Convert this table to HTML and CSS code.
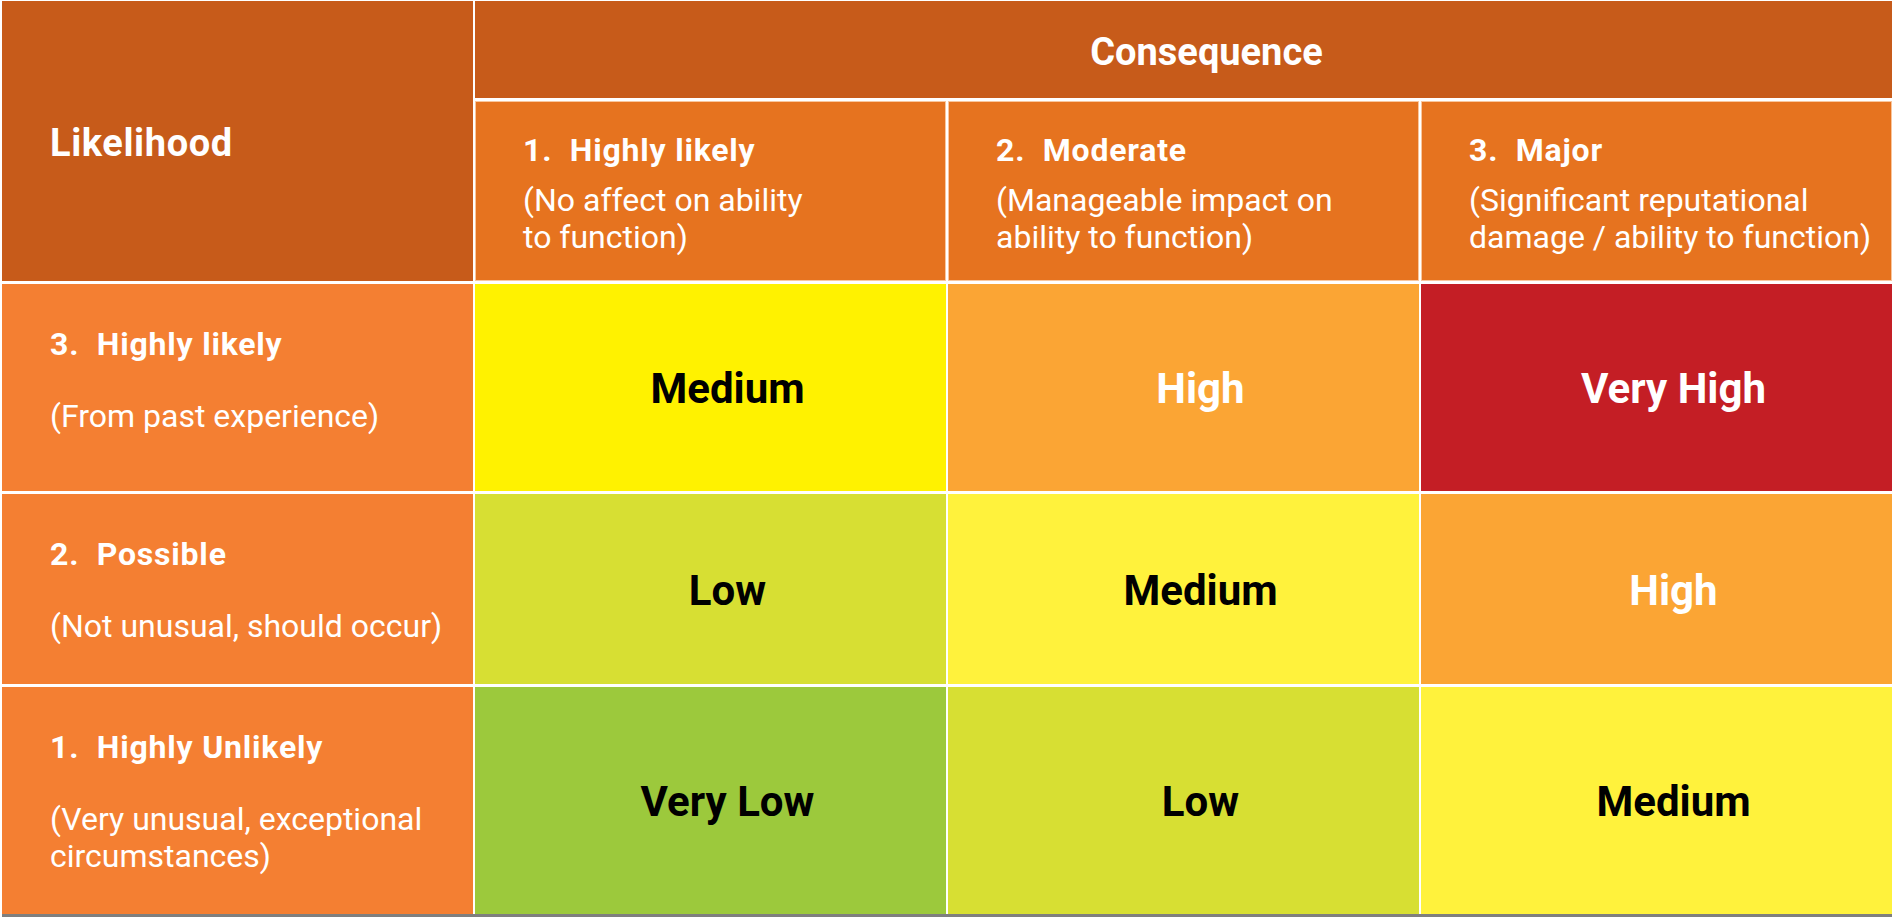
FILE: index.html
```html
<!DOCTYPE html>
<html lang="en">
<head>
<meta charset="utf-8">
<title>Risk matrix</title>
<link rel="stylesheet" href="styles.css">
</head>
<body>
<div class="matrix">
  <div class="cell likelihood">Likelihood</div>
  <div class="cell consequence">Consequence</div>

  <div class="cell sub">
    <div class="title">1.&nbsp; Highly likely</div>
    <div class="desc">(No affect on ability<br>to function)</div>
  </div>
  <div class="cell sub">
    <div class="title">2.&nbsp; Moderate</div>
    <div class="desc">(Manageable impact on<br>ability to function)</div>
  </div>
  <div class="cell sub">
    <div class="title">3.&nbsp; Major</div>
    <div class="desc">(Significant reputational<br>damage / ability to function)</div>
  </div>

  <div class="cell label">
    <div class="title">3.&nbsp; Highly likely</div>
    <div class="desc">(From past experience)</div>
  </div>
  <div class="cell value medium-a">Medium</div>
  <div class="cell value high light">High</div>
  <div class="cell value very-high light">Very High</div>

  <div class="cell label">
    <div class="title">2.&nbsp; Possible</div>
    <div class="desc">(Not unusual, should occur)</div>
  </div>
  <div class="cell value low">Low</div>
  <div class="cell value medium-b">Medium</div>
  <div class="cell value high light">High</div>

  <div class="cell label">
    <div class="title">1.&nbsp; Highly Unlikely</div>
    <div class="desc">(Very unusual, exceptional<br>circumstances)</div>
  </div>
  <div class="cell value very-low">Very Low</div>
  <div class="cell value low">Low</div>
  <div class="cell value medium-b">Medium</div>
</div>
</body>
</html>
```

FILE: styles.css
```css
html, body {
  margin: 0;
  padding: 0;
  background: #ffffff;
}

body {
  font-family: Roboto, "Liberation Sans", sans-serif;
  color: #ffffff;
  overflow: hidden;
}

.matrix {
  display: grid;
  grid-template-columns: repeat(4, 471px);
  grid-template-rows: 97px 180px 207px 190px 227px;
  gap: 3px 2px;
  width: 1890px;
  margin: 1px 0 0 2px;
  border-bottom: 3px solid #7f7f7f;
}

.cell {
  box-sizing: border-box;
}

.likelihood {
  grid-column: 1;
  grid-row: 1 / 3;
  background: #c75b1a;
  font-weight: 700;
  font-size: 38px;
  line-height: 44px;
  letter-spacing: 0.6px;
  padding: 120px 0 0 48px;
}

.consequence {
  grid-column: 2 / 5;
  grid-row: 1;
  background: #c75b1a;
  font-weight: 700;
  font-size: 38px;
  line-height: 44px;
  display: flex;
  align-items: center;
  justify-content: center;
  padding: 4px 0 0 46px;
}

.sub {
  background: #e6731f;
  box-shadow: inset 0 0 0 1px rgba(255, 225, 200, 0.75);
  padding: 31px 0 0 48px;
}

.title {
  font-weight: 700;
  font-size: 32px;
  line-height: 37px;
  letter-spacing: 0.8px;
}

.desc {
  font-weight: 400;
  font-size: 32px;
  line-height: 37px;
}

.sub .desc {
  margin-top: 13px;
}

.label {
  background: #f47f32;
  padding: 42px 0 0 48px;
}

.label .desc {
  margin-top: 35px;
}

.value {
  display: flex;
  align-items: center;
  justify-content: center;
  padding: 2px 0 0 34px;
  font-weight: 700;
  font-size: 42px;
  color: #000000;
}

.value.light {
  color: #ffffff;
}

.medium-a { background: #fff200; }
.medium-b { background: #fff23c; }
.high { background: #fba534; }
.very-high { background: #c41e25; }
.low { background: #d7df33; }
.very-low { background: #9cc93c; }
```
